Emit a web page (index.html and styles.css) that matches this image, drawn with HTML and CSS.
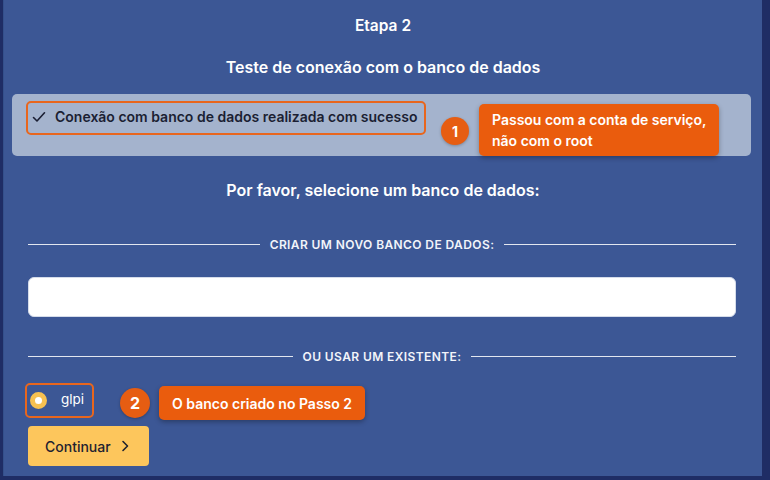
FILE: index.html
```html
<!DOCTYPE html>
<html lang="pt-BR">
<head>
<meta charset="utf-8">
<title>Etapa 2</title>
<link rel="stylesheet" href="styles.css">
</head>
<body>
<div class="panel">
  <h2 class="title">Etapa 2</h2>
  <h3 class="subtitle">Teste de conexão com o banco de dados</h3>

  <div class="alert">
    <div class="hl hl-alert">
      <svg class="check" width="14" height="12" viewBox="0 0 14 12"><path d="M1.5 6.5 L5 10 L12.5 1.8" fill="none" stroke="#1b1f33" stroke-width="1.6" stroke-linecap="round" stroke-linejoin="round"/></svg>
      <span class="alert-text">Conexão com banco de dados realizada com sucesso</span>
    </div>
    <div class="badge badge-1">1</div>
    <div class="callout callout-1">Passou com a conta de serviço,<br>não com o root</div>
  </div>

  <h3 class="subtitle select">Por favor, selecione um banco de dados:</h3>

  <div class="content">
    <div class="divider div-1"><span class="line"></span><span class="label">Criar um novo banco de dados:</span><span class="line"></span></div>
    <div class="input"></div>
    <div class="divider div-2"><span class="line"></span><span class="label">Ou usar um existente:</span><span class="line"></span></div>
    <div class="radio-row">
      <div class="hl hl-radio">
        <span class="radio"></span>
        <span class="radio-label">glpi</span>
      </div>
      <div class="badge badge-2">2</div>
      <div class="callout callout-2">O banco criado no Passo 2</div>
    </div>
    <div class="button">Continuar <svg class="chev" width="8" height="12" viewBox="0 0 8 12"><path d="M2 1.5 L6.5 6 L2 10.5" fill="none" stroke="#1f2230" stroke-width="1.6" stroke-linecap="round" stroke-linejoin="round"/></svg></div>
  </div>
</div>
</body>
</html>
```

FILE: styles.css
```css
* { box-sizing: border-box; }
html, body { margin: 0; padding: 0; }
body {
  background: #1f2d65;
  font-family: Inter, "Noto Sans", "Liberation Sans", sans-serif;
  width: 770px;
  height: 480px;
  overflow: hidden;
}
.panel {
  margin-left: 3px;
  width: 759px;
  height: 476px;
  background: #3c5795;
  border-left: 1px solid #34508b;
  padding-top: 16px;
  display: flex;
  flex-direction: column;
}
.title, .subtitle {
  margin: 0;
  color: #ffffff;
  text-align: center;
  font-weight: 600;
  line-height: 20px;
}
.title { font-size: 15.5px; }
.subtitle { font-size: 16px; margin-top: 21px; }
.subtitle.select { margin-top: 24px; }
.alert {
  margin: 17px 0 0 8px;
  width: 739px;
  height: 62px;
  background: #a4b3cd;
  border-radius: 5px;
  display: flex;
  align-items: flex-start;
  padding-left: 14px;
}
.hl {
  border: 2.5px solid #e8661d;
  border-radius: 5px;
  display: flex;
  align-items: center;
}
.hl-alert {
  margin-top: 7px;
  width: 400px;
  height: 34px;
  padding-left: 4px;
}
.check { margin-right: 9px; margin-top: -2px; }
.alert-text {
  font-size: 14px;
  font-weight: 600;
  color: #1b1f33;
  margin-top: -3px;
}
.badge {
  border-radius: 50%;
  background: #e65d12;
  color: #fff;
  font-weight: 700;
  display: flex;
  align-items: center;
  justify-content: center;
  box-shadow: 0 1px 3px rgba(0,0,0,0.25);
}
.badge-1 {
  width: 28px; height: 28px;
  margin: 23px 0 0 15px;
  font-size: 14px;
}
.callout {
  background: #ea5c0d;
  color: #fff;
  font-weight: 600;
  border-radius: 5px;
  box-shadow: 0 2px 5px rgba(0,0,0,0.3);
}
.callout-1 {
  margin: 10px 0 0 10px;
  width: 240px;
  height: 52px;
  font-size: 14px;
  line-height: 21px;
  padding: 5px 0 0 13px;
}
.content {
  padding: 0 26px 0 24px;
  display: flex;
  flex-direction: column;
}
.divider {
  display: flex;
  align-items: center;
  height: 14px;
  gap: 10px;
}
.div-1 { margin-top: 37px; }
.div-2 { margin-top: 32px; }
.line { flex: 1; height: 1px; background: rgba(255,255,255,0.85); }
.label {
  color: #f2f4fa;
  font-size: 12px;
  font-weight: 600;
  text-transform: uppercase;
  letter-spacing: 0.4px;
}
.input {
  margin-top: 26px;
  height: 40px;
  background: #ffffff;
  border-radius: 6px;
  border: 1px solid #d5dcea;
}
.radio-row {
  margin-top: 20px;
  display: flex;
  align-items: flex-start;
}
.hl-radio {
  margin-left: -3px;
  width: 69px;
  height: 35px;
  padding-left: 3px;
}
.radio {
  width: 17px; height: 17px;
  border-radius: 50%;
  background: #fff;
  border: 5.5px solid #f7c151;
}
.radio-label {
  color: #fff;
  font-size: 13.5px;
  margin-left: 14px;
  margin-top: -3px;
}
.badge-2 {
  width: 30px; height: 30px;
  margin: 5px 0 0 26px;
  font-size: 16px;
}
.callout-2 {
  margin: 3px 0 0 9px;
  width: 206px;
  height: 34px;
  font-size: 14px;
  display: flex;
  align-items: center;
  padding-left: 13px;
}
.button {
  margin-top: 6px;
  width: 121px;
  height: 40px;
  background: #fdc65c;
  border-radius: 4px;
  color: #1f2230;
  font-size: 14px;
  font-weight: 500;
  display: flex;
  align-items: center;
  padding-left: 17px;
  gap: 10px;
}
```
